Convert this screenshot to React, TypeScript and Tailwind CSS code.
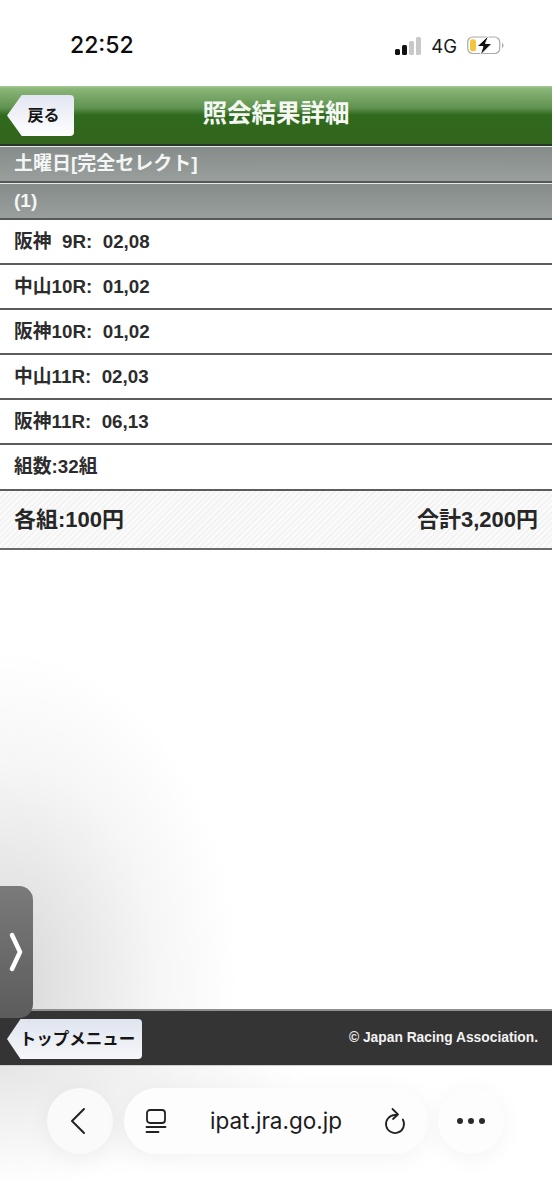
import React from "react";

const FONT = "font-['Liberation_Sans','Noto_Sans_CJK_JP',sans-serif]";

function Row({ children, h }: { children: React.ReactNode; h: string }) {
  return (
    <div className={`${h} flex items-center px-[14px] pt-[2px] border-b-2 border-[#5c5c5c] text-[18.800px] font-bold text-[#2c2c2c] bg-white`}>
      {children}
    </div>
  );
}

function Gray({ children, h }: { children: React.ReactNode; h: string }) {
  return (
    <div className={`${h} flex items-center px-[14px] border-t border-[#e4e8e6] border-b-2 border-b-[#555a58] text-[19px] font-bold text-[#f4f6f5] bg-gradient-to-b from-[#858c8a] to-[#989f9c]`}>
      {children}
    </div>
  );
}

export default function App() {
  return (
    <div className={`${FONT} relative w-[552px] h-[1200px] overflow-hidden bg-white flex flex-col`}>
      {/* status bar */}
      <div className="h-[86px] flex items-start justify-between bg-white">
        <div className="ml-[70px] mt-[29px] text-[23px] leading-[32px] font-['Inter',sans-serif] font-medium text-[#0c0c0c]">22:52</div>
        <div className="flex items-center mr-[48px] mt-[35px] gap-[8px]">
          <svg width="27" height="18" viewBox="0 0 27 18" className="mr-[1px]">
            <rect x="0" y="12" width="5" height="6" rx="1.500" fill="#111" />
            <rect x="7" y="8" width="5" height="10" rx="1.500" fill="#111" />
            <rect x="14" y="4" width="5" height="14" rx="1.500" fill="#c9c9c9" />
            <rect x="21" y="0" width="5" height="18" rx="1.500" fill="#c9c9c9" />
          </svg>
          <span className="text-[18.500px] leading-[20px] font-['Inter',sans-serif] text-[#1a1a1a]">4G</span>
          <svg width="37" height="21" viewBox="0 0 37 21" className="ml-[2px]">
            <rect x="0.700" y="2" width="32" height="16.500" rx="5" fill="none" stroke="#a9a9a9" strokeWidth="1.200" />
            <rect x="3" y="4.200" width="6" height="12" rx="2.500" fill="#f4c63c" />
            <path d="M35 8v5c1-.4 1.500-1.400 1.500-2.500S36 8.400 35 8z" fill="#a9a9a9" />
            <path d="M22 0 10 11.500h6L13 20.500l12-12h-6.500z" fill="#111" stroke="#fff" strokeWidth="1" />
          </svg>
        </div>
      </div>

      {/* header */}
      <div className="relative h-[60px] bg-[linear-gradient(#a5c795_0px,#8ab577_3px,#5f9250_22px,#2f6a1d_29px,#33641d_100%)] border-b-2 border-[#27352a] flex items-center justify-center">
        <span className="text-[24.500px] font-bold text-[#f5f8f2] mt-[-1px]">照会結果詳細</span>
        <div className="absolute left-[7px] top-[9px] w-[67px] h-[41px] flex items-center justify-center pl-[6px] text-[16px] font-bold text-[#161616] bg-gradient-to-b from-[#e2e6f1] to-[#ffffff] rounded-r-[4px] [clip-path:polygon(22%_0,100%_0,100%_100%,22%_100%,0_50%)]">
          戻る
        </div>
      </div>

      <Gray h="h-[37px]">土曜日[完全セレクト]</Gray>
      <Gray h="h-[37px]">(1)</Gray>

      <Row h="h-[45px]"><span className="whitespace-pre">阪神  9R:  02,08</span></Row>
      <Row h="h-[45px]"><span className="whitespace-pre">中山10R:  01,02</span></Row>
      <Row h="h-[45px]"><span className="whitespace-pre">阪神10R:  01,02</span></Row>
      <Row h="h-[45px]"><span className="whitespace-pre">中山11R:  02,03</span></Row>
      <Row h="h-[45px]"><span className="whitespace-pre">阪神11R:  06,13</span></Row>
      <Row h="h-[46px]"><span className="mt-[-2px]">組数:32組</span></Row>

      {/* summary */}
      <div className="h-[59px] flex items-center justify-between px-[14px] text-[22px] font-bold text-[#262626] border-b-2 border-[#6a6a6a] bg-[repeating-linear-gradient(135deg,#f3f3f3_0px,#f3f3f3_2px,#fbfbfb_2px,#fbfbfb_4px)]">
        <span>各組:100円</span>
        <span>合計3,200円</span>
      </div>

      {/* page blank with shadow */}
      <div className="relative h-[459px] bg-[radial-gradient(ellipse_240px_330px_at_0px_430px,#d6d6d6_0%,#e6e6e6_32%,#f6f6f6_66%,#ffffff_100%)]" />

      {/* footer */}
      <div className="relative h-[56px] bg-[#343434] border-t-2 border-[#8f8f8f] flex items-center justify-end pr-[14px]">
        <span className="text-[13.800px] font-bold text-[#f2f2f2]">© Japan Racing Association.</span>
        <div className="absolute left-[7px] top-[8px] w-[135px] h-[40px] flex items-center justify-center pl-[6px] text-[16.500px] font-bold text-[#161616] whitespace-nowrap bg-gradient-to-b from-[#dfe4ee] to-[#f6f7f9] rounded-r-[4px] [clip-path:polygon(10%_0,100%_0,100%_100%,10%_100%,0_50%)]">
          トップメニュー
        </div>
      </div>

      {/* browser bar */}
      <div className="flex-1 relative bg-[radial-gradient(ellipse_300px_120px_at_0px_0px,#e6e6e6_0%,#f5f5f5_60%,#ffffff_100%)] border-t border-[#cfcfcf]">
        <div className="flex items-center pl-[47px] pt-[22px] gap-[11px]">
          <div className="w-[66px] h-[66px] rounded-full bg-[#fafafa] shadow-[0_4px_24px_rgba(0,0,0,0.05)] flex items-center justify-center shrink-0">
            <svg width="18" height="28" viewBox="0 0 18 28" fill="none" stroke="#222" strokeWidth="2" strokeLinecap="round" strokeLinejoin="round" className="mr-[4px]">
              <path d="M15 2 3 14l12 12" />
            </svg>
          </div>
          <div className="w-[304px] h-[66px] rounded-full bg-[#fdfdfd] shadow-[0_4px_24px_rgba(0,0,0,0.05)] flex items-center pl-[21px] pr-[21px] justify-between shrink-0">
            <svg width="22" height="26" viewBox="0 0 22 26" fill="none" stroke="#222" strokeWidth="1.800" strokeLinecap="round">
              <rect x="2" y="2" width="18" height="13" rx="3" />
              <path d="M1.500 19h19M1.500 24h12" />
            </svg>
            <span className="text-[22.500px] font-['Inter',sans-serif] text-[#1c1c1c] ml-[2px]">ipat.jra.go.jp</span>
            <svg width="24" height="28" viewBox="0 0 24 28" fill="none" stroke="#222" strokeWidth="1.800" strokeLinecap="round" strokeLinejoin="round">
              <path d="M19.800 12.500A9 9 0 1 1 12 8h2" />
              <path d="M9.500 2 15 7.500 10 12" />
            </svg>
          </div>
          <div className="w-[66px] h-[66px] rounded-full bg-[#fdfdfd] shadow-[0_4px_24px_rgba(0,0,0,0.05)] flex items-center justify-center gap-[5px] shrink-0 ml-[-1px]">
            <span className="w-[6px] h-[6px] rounded-full bg-[#2a2a2a]" />
            <span className="w-[6px] h-[6px] rounded-full bg-[#2a2a2a]" />
            <span className="w-[6px] h-[6px] rounded-full bg-[#2a2a2a]" />
          </div>
        </div>
      </div>

      {/* side tab */}
      <div className="absolute left-0 top-[886px] w-[33px] h-[132px] rounded-r-[14px] bg-gradient-to-b from-[#7a7a7a] to-[#5c5c5c] flex items-center justify-center">
        <svg width="16" height="40" viewBox="0 0 16 40" fill="none" stroke="#fff" strokeWidth="4.500" strokeLinecap="round" strokeLinejoin="round" className="mr-[1px]">
          <path d="M4 3l8 17-8 17" />
        </svg>
      </div>
    </div>
  );
}
